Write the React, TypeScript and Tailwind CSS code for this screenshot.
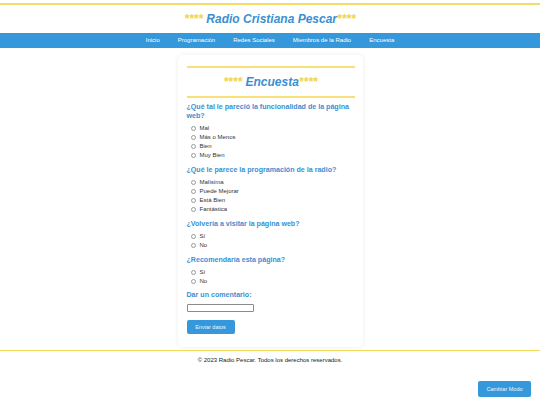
import React from "react";

const Radio = ({ label }: { label: string }) => (
  <div className="flex items-center h-[9px] ml-[4px]">
    <span className="w-[5px] h-[5px] rounded-full border border-[#9a9a9a] bg-white mr-[4px] shrink-0" />
    <span className="text-[6px] leading-[9px] text-[#333]">{label}</span>
  </div>
);

const Question = ({ q, opts, mt }: { q: string; opts: string[]; mt: string }) => (
  <div className={mt}>
    <p className="text-[7.1px] leading-[9px] font-bold text-[#3b8fd1]">{q}</p>
    <div className="mt-[3px] flex flex-col">
      {opts.map((o) => (
        <Radio key={o} label={o} />
      ))}
    </div>
  </div>
);

export default function App() {
  return (
    <div className="relative min-h-[405px] pt-[3px] bg-white font-['Liberation_Sans',Arial,sans-serif]">
      <div className="h-[1.5px] bg-[#f4dc68]" />
      <header className="h-[28.5px] flex items-center justify-center">
        <h1 className="text-[12px] leading-[14px] font-bold italic text-[#3b8fd1]">
          <span className="text-[#f2d445]">****</span> Radio Cristiana Pescar
          <span className="text-[#f2d445]">****</span>
        </h1>
      </header>
      <nav className="h-[15px] bg-[#3498db] flex items-center justify-center gap-[18px]">
        {["Inicio", "Programación", "Redes Sociales", "Miembros de la Radio", "Encuesta"].map((n) => (
          <span key={n} className="text-[6px] text-white leading-[15px]">
            {n}
          </span>
        ))}
      </nav>
      <main className="w-[185px] mx-auto mt-[7px] bg-white rounded-[5px] shadow-[0_0_5px_rgba(0,0,0,0.08)] pt-[11px] pb-[13px] pl-[9px] pr-[8px]">
        <div className="border-y-2 border-[#f7e07a] h-[32px] flex items-center justify-center">
          <h2 className="text-[12px] leading-[14px] font-bold italic text-[#3b8fd1]">
            <span className="text-[#f2d445]">****</span> Encuesta
            <span className="text-[#f2d445]">****</span>
          </h2>
        </div>
        <Question
          mt="mt-[5px]"
          q="¿Qué tal le pareció la funcionalidad de la página web?"
          opts={["Mal", "Más o Menos", "Bien", "Muy Bien"]}
        />
        <Question
          mt="mt-[6px]"
          q="¿Qué le parece la programación de la radio?"
          opts={["Malísima", "Puede Mejorar", "Está Bien", "Fantástica"]}
        />
        <Question mt="mt-[6px]" q="¿Volvería a visitar la página web?" opts={["Sí", "No"]} />
        <Question mt="mt-[6px]" q="¿Recomendaría esta página?" opts={["Sí", "No"]} />
        <p className="mt-[5px] text-[7.1px] leading-[9px] font-bold text-[#3b8fd1]">Dar un comentario:</p>
        <div className="mt-[4px] w-[67px] h-[8px] border border-[#8a8a8a] rounded-[1px] bg-white" />
        <button className="mt-[8px] w-[48px] h-[14px] rounded-[2px] bg-[#3498db] text-[#eef6fc] text-[5.5px] flex items-center justify-center">
          Enviar datos
        </button>
      </main>
      <div className="mt-[3px] h-px bg-[#f3d85a]" />
      <footer className="h-[19px] flex items-center justify-center">
        <p className="text-[6px] text-[#222]">© 2023 Radio Pescar. Todos los derechos reservados.</p>
      </footer>
      <button className="absolute right-[9px] top-[381px] w-[53px] h-[16px] rounded-[2px] bg-[#3498db] text-[#eef6fc] text-[5.5px] flex items-center justify-center">
        Cambiar Modo
      </button>
    </div>
  );
}
